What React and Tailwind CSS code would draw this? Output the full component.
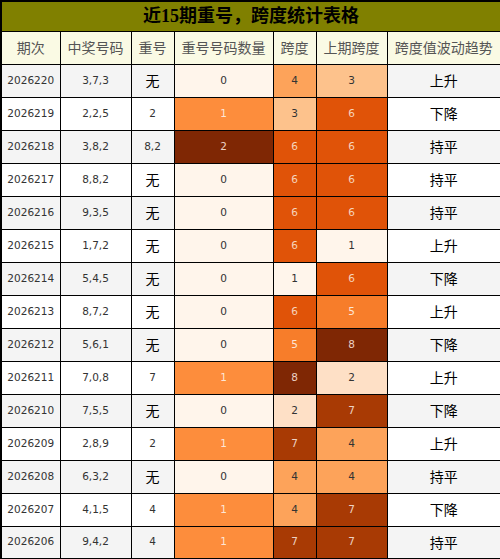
import React from "react";

const ROWS = [
  ["2026220", "3,7,3", "无", 0, 4, 3, "上升"],
  ["2026219", "2,2,5", "2", 1, 3, 6, "下降"],
  ["2026218", "3,8,2", "8,2", 2, 6, 6, "持平"],
  ["2026217", "8,8,2", "无", 0, 6, 6, "持平"],
  ["2026216", "9,3,5", "无", 0, 6, 6, "持平"],
  ["2026215", "1,7,2", "无", 0, 6, 1, "上升"],
  ["2026214", "5,4,5", "无", 0, 1, 6, "下降"],
  ["2026213", "8,7,2", "无", 0, 6, 5, "上升"],
  ["2026212", "5,6,1", "无", 0, 5, 8, "下降"],
  ["2026211", "7,0,8", "7", 1, 8, 2, "上升"],
  ["2026210", "7,5,5", "无", 0, 2, 7, "下降"],
  ["2026209", "2,8,9", "2", 1, 7, 4, "上升"],
  ["2026208", "6,3,2", "无", 0, 4, 4, "持平"],
  ["2026207", "4,1,5", "4", 1, 4, 7, "下降"],
  ["2026206", "9,4,2", "4", 1, 7, 7, "持平"],
];

/* 重号号码数量 colours */
const COUNT_STYLE = {
  0: "bg-[#fff5eb] text-[#333]",
  1: "bg-[#fd8d3c] text-[#fde6d6]",
  2: "bg-[#7f2704] text-[#ecd2c4]",
};

/* 跨度 colours, Oranges scale */
const SPAN_STYLE = {
  0: "bg-[#fff5eb] text-[#333]",
  1: "bg-[#fff5eb] text-[#333]",
  2: "bg-[#fee0c6] text-[#333]",
  3: "bg-[#fdc28c] text-[#333]",
  4: "bg-[#fda35a] text-[#333]",
  5: "bg-[#f77d2a] text-[#fde6d6]",
  6: "bg-[#e05308] text-[#f6d3bd]",
  7: "bg-[#a83a04] text-[#ecd2c4]",
  8: "bg-[#7f2704] text-[#ecd2c4]",
};

const HEADERS = ["期次", "中奖号码", "重号", "重号号码数量", "跨度", "上期跨度", "跨度值波动趋势"];

export default function App() {
  return (
    <div className="w-[500px] h-[559px] bg-white font-['DejaVu_Sans','Noto_Sans_CJK_SC',sans-serif]">
      <table className="w-[500px] table-fixed border-collapse border-2 border-black">
        <colgroup>
          <col className="w-[59px]" />
          <col className="w-[71px]" />
          <col className="w-[43px]" />
          <col className="w-[99px]" />
          <col className="w-[43px]" />
          <col className="w-[71px]" />
          <col className="w-[114px]" />
        </colgroup>
        <thead>
          <tr>
            <th
              colSpan={7}
              className="h-[30px] border border-black bg-[#808000] text-black text-[18px] font-bold leading-none font-['Liberation_Serif','Noto_Sans_CJK_SC',serif]"
            >
              近15期重号，跨度统计表格
            </th>
          </tr>
          <tr>
            {HEADERS.map((h) => (
              <th
                key={h}
                className="h-[33px] border border-black bg-[#fafae4] text-[#555] text-[14px] font-normal font-['Noto_Sans_CJK_SC',sans-serif] whitespace-nowrap"
              >
                {h}
              </th>
            ))}
          </tr>
        </thead>
        <tbody>
          {ROWS.map((r, i) => {
            const base = i % 2 === 0 ? "bg-[#f4f4f4]" : "bg-white";
            return (
              <tr key={r[0]} className="h-[33px]">
                <td className={`border border-black text-center text-[10.5px] text-[#333] ${base}`}>{r[0]}</td>
                <td className={`border border-black text-center text-[10.5px] text-[#333] ${base}`}>{r[1]}</td>
                <td
                  className={`border border-black text-center ${base} ${
                    r[2] === "无" ? "text-[14px] text-black font-['Noto_Sans_CJK_SC',sans-serif]" : "text-[10.5px] text-[#333]"
                  }`}
                >
                  {r[2]}
                </td>
                <td className={`border border-black text-center text-[10.5px] ${COUNT_STYLE[r[3]]}`}>{r[3]}</td>
                <td className={`border border-black text-center text-[10.5px] ${SPAN_STYLE[r[4]]}`}>{r[4]}</td>
                <td className={`border border-black text-center text-[10.5px] ${SPAN_STYLE[r[5]]}`}>{r[5]}</td>
                <td className={`border border-black text-center text-[14px] text-black font-['Noto_Sans_CJK_SC',sans-serif] ${base}`}>
                  {r[6]}
                </td>
              </tr>
            );
          })}
        </tbody>
      </table>
    </div>
  );
}
